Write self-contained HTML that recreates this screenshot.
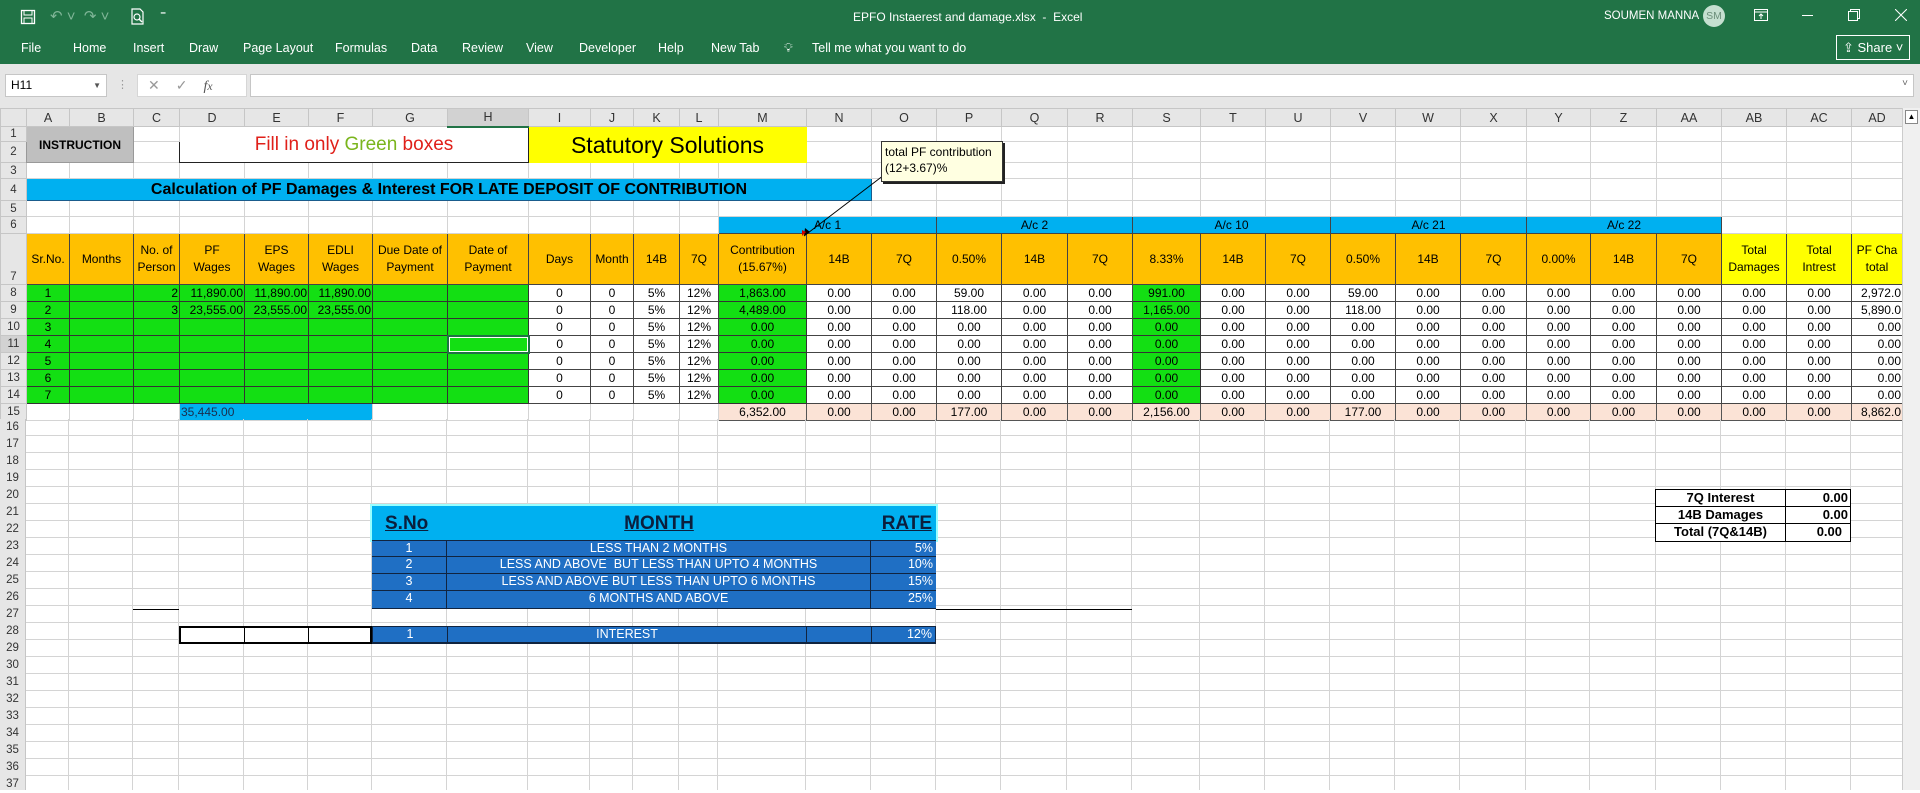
<!DOCTYPE html>
<html><head><meta charset="utf-8"><style>
*{box-sizing:border-box;margin:0;padding:0}
body{width:1920px;height:790px;overflow:hidden;background:#fff;font-family:"Liberation Sans",Arial,sans-serif;position:relative}
#title{position:absolute;left:0;top:0;width:1920px;height:64px;background:#217346;color:#fff}
#title .t{position:absolute;top:10px;font-size:12px}
#tabs span{position:absolute;top:41px;font-size:12.5px;color:#fff}
#fbar{position:absolute;left:0;top:64px;width:1920px;height:44px;background:#e6e6e6}
table{position:absolute;left:0;top:108px;width:1902px;border-collapse:collapse;table-layout:fixed;font-size:12px}
td{border:1px solid #d4d4d4;overflow:hidden;white-space:nowrap;padding:0 1px;line-height:14px}
td.h{background:#e6e6e6;text-align:center;color:#333;font-size:12.5px;border-color:#c6c6c6}
td.rh{background:#e6e6e6;text-align:center;color:#333;font-size:11.5px;border-color:#c6c6c6;padding:0}
.g{background:#13df13;border-color:#333}
.y{background:#ffc000;border-color:#444;text-align:center;white-space:normal;line-height:17px;padding:0 8px}
.yy{background:#ffff00;border-color:#444;text-align:center;white-space:normal;line-height:17px}
.b{background:#00b0f0;border-color:#444;text-align:center}
.p{background:#fbe3d6;border-color:#555}
.r{text-align:right}
.c{text-align:center}
.d{border-color:#444}
</style></head><body>
<div id="title">
<svg style="position:absolute;left:20px;top:9px" width="16" height="16" viewBox="0 0 16 16"><rect x="1.5" y="1.5" width="13" height="13" fill="none" stroke="#fff" stroke-width="1.3"/><rect x="4" y="1.5" width="8" height="4.5" fill="none" stroke="#fff"/><rect x="4" y="9" width="8" height="5.5" fill="none" stroke="#fff"/></svg>
<span class="t" style="left:50px;top:7px;font-size:15px;color:#7fb597">↶ ˅ &nbsp;↷ ˅</span>
<svg style="position:absolute;left:130px;top:8px" width="16" height="18" viewBox="0 0 16 18"><path d="M2 1h8l3 3v12H2z" fill="none" stroke="#fff" stroke-width="1.2"/><circle cx="7" cy="9" r="3" fill="none" stroke="#fff" stroke-width="1.2"/><path d="M9 11l3 3" stroke="#fff" stroke-width="1.4"/></svg>
<span class="t" style="left:160px;top:8px">⁼</span>
<span class="t" style="left:853px">EPFO Instaerest and damage.xlsx &nbsp;- &nbsp;Excel</span>
<span class="t" style="left:1604px;font-size:11.5px">SOUMEN MANNA</span>
<div style="position:absolute;left:1703px;top:5px;width:22px;height:22px;border-radius:50%;background:#c5dfd0;color:#6c8f7a;font-size:10.5px;text-align:center;line-height:22px">SM</div>
<svg style="position:absolute;left:1754px;top:9px" width="14" height="12"><rect x="0.5" y="0.5" width="13" height="11" fill="none" stroke="#fff"/><path d="M0 3h14M7 10V5M5 7l2-2 2 2" stroke="#fff" fill="none"/></svg>
<div style="position:absolute;left:1802px;top:15px;width:11px;height:1px;background:#fff"></div>
<svg style="position:absolute;left:1848px;top:9px" width="12" height="12"><rect x="0.5" y="2.5" width="9" height="9" fill="none" stroke="#fff"/><path d="M2.5 2.5V0.5h9v9h-2" fill="none" stroke="#fff"/></svg>
<svg style="position:absolute;left:1895px;top:9px" width="12" height="12"><path d="M0 0l12 12M12 0L0 12" stroke="#fff"/></svg>
<div id="tabs"><span style="left:21px">File</span><span style="left:73px">Home</span><span style="left:133px">Insert</span><span style="left:189px">Draw</span><span style="left:243px">Page Layout</span><span style="left:335px">Formulas</span><span style="left:411px">Data</span><span style="left:462px">Review</span><span style="left:526px">View</span><span style="left:579px">Developer</span><span style="left:658px">Help</span><span style="left:711px">New Tab</span><span style="left:784px">💡︎</span><span style="left:812px">Tell me what you want to do</span></div>
<div style="position:absolute;left:1836px;top:35px;width:74px;height:25px;border:1px solid #fff;color:#fff;font-size:13px;line-height:23px;padding-left:6px">⇪ Share ˅</div>
</div>
<div id="fbar">
<div style="position:absolute;left:5px;top:10px;width:102px;height:23px;background:#fff;border:1px solid #c6c6c6;font-size:12px;line-height:21px;padding-left:5px">H11<span style="position:absolute;right:5px;font-size:8px;color:#555">▼</span></div>
<span style="position:absolute;left:117px;top:14px;color:#999;font-size:11px">⋮</span>
<div style="position:absolute;left:137px;top:10px;width:110px;height:23px;background:#fff;border:1px solid #d6d6d6;color:#999;font-size:14px;line-height:21px"><span style="margin-left:10px">✕</span><span style="margin-left:16px">✓</span><i style="margin-left:16px;font-family:'Liberation Serif';color:#555">f<small>x</small></i></div>
<div style="position:absolute;left:250px;top:10px;width:1664px;height:23px;background:#fff;border:1px solid #c6c6c6"><span style="position:absolute;right:5px;top:3px;font-size:10px;color:#666">˅</span></div>
</div>
<table>
<colgroup><col style="width:26px"><col style="width:43px"><col style="width:64px"><col style="width:46px"><col style="width:65px"><col style="width:64px"><col style="width:64px"><col style="width:75px"><col style="width:81px"><col style="width:62px"><col style="width:43px"><col style="width:46px"><col style="width:39px"><col style="width:88px"><col style="width:65px"><col style="width:65px"><col style="width:65px"><col style="width:66px"><col style="width:65px"><col style="width:68px"><col style="width:65px"><col style="width:65px"><col style="width:65px"><col style="width:65px"><col style="width:66px"><col style="width:64px"><col style="width:66px"><col style="width:65px"><col style="width:65px"><col style="width:65px"><col style="width:51px"></colgroup>
<tr style="height:18px"><td class="h"></td><td class="h">A</td><td class="h">B</td><td class="h">C</td><td class="h">D</td><td class="h">E</td><td class="h">F</td><td class="h">G</td><td class="h" style="background:#d2d2d2;border-bottom:2px solid #217346">H</td><td class="h">I</td><td class="h">J</td><td class="h">K</td><td class="h">L</td><td class="h">M</td><td class="h">N</td><td class="h">O</td><td class="h">P</td><td class="h">Q</td><td class="h">R</td><td class="h">S</td><td class="h">T</td><td class="h">U</td><td class="h">V</td><td class="h">W</td><td class="h">X</td><td class="h">Y</td><td class="h">Z</td><td class="h">AA</td><td class="h">AB</td><td class="h">AC</td><td class="h">AD</td></tr>
<tr style="height:13px"><td class="rh">1</td><td rowspan="2" colspan="2" style="background:#bfbfbf;border-color:#999;font-weight:bold;font-size:12px;text-align:center">INSTRUCTION</td><td></td><td rowspan="2" colspan="5" style="border:1px solid #222;text-align:center;font-size:19px;color:#e0201a">Fill in only <span style="color:#7ab51d">Green</span> boxes</td><td rowspan="2" colspan="5" style="background:#ffff00;border-color:#ffff00;text-align:center;font-size:23px">Statutory Solutions</td><td></td><td></td><td></td><td></td><td></td><td></td><td></td><td></td><td></td><td></td><td></td><td></td><td></td><td></td><td></td><td></td><td></td></tr>
<tr style="height:21px"><td class="rh">2</td><td></td><td></td><td></td><td></td><td></td><td></td><td></td><td></td><td></td><td></td><td></td><td></td><td></td><td></td><td></td><td></td><td></td><td></td></tr>
<tr style="height:16px"><td class="rh">3</td><td></td><td></td><td></td><td></td><td></td><td></td><td></td><td></td><td></td><td></td><td></td><td></td><td></td><td></td><td></td><td></td><td></td><td></td><td></td><td></td><td></td><td></td><td></td><td></td><td></td><td></td><td></td><td></td><td></td></tr>
<tr style="height:22px"><td class="rh">4</td><td colspan="14" style="background:#00b0f0;border:1px solid #1a5c8c;text-align:center;font-weight:bold;font-size:16px">Calculation of PF Damages &amp; Interest FOR LATE DEPOSIT OF CONTRIBUTION</td><td></td><td></td><td></td><td></td><td></td><td></td><td></td><td></td><td></td><td></td><td></td><td></td><td></td><td></td><td></td><td></td></tr>
<tr style="height:16px"><td class="rh">5</td><td></td><td></td><td></td><td></td><td></td><td></td><td></td><td></td><td></td><td></td><td></td><td></td><td></td><td></td><td></td><td></td><td></td><td></td><td></td><td></td><td></td><td></td><td></td><td></td><td></td><td></td><td></td><td></td><td></td></tr>
<tr style="height:17px"><td class="rh">6</td><td></td><td></td><td></td><td></td><td></td><td></td><td></td><td></td><td></td><td></td><td></td><td></td><td class="b" colspan="3">A/c 1</td><td class="b" colspan="3">A/c 2</td><td class="b" colspan="3">A/c 10</td><td class="b" colspan="3">A/c 21</td><td class="b" colspan="3">A/c 22</td><td></td><td></td><td></td></tr>
<tr style="height:51px"><td class="rh" style="vertical-align:bottom">7</td><td class="y" style="padding:0">Sr.No.</td><td class="y">Months</td><td class="y" style="padding:0">No. of Person</td><td class="y">PF Wages</td><td class="y">EPS Wages</td><td class="y">EDLI Wages</td><td class="y" style="padding:0">Due Date of Payment</td><td class="y">Date of Payment</td><td class="y">Days</td><td class="y" style="padding:0">Month</td><td class="y" style="padding:0">14B</td><td class="y" style="padding:0">7Q</td><td class="y" style="padding:0">Contribution (15.67%)</td><td class="y">14B</td><td class="y">7Q</td><td class="y">0.50%</td><td class="y">14B</td><td class="y">7Q</td><td class="y">8.33%</td><td class="y">14B</td><td class="y">7Q</td><td class="y">0.50%</td><td class="y">14B</td><td class="y">7Q</td><td class="y">0.00%</td><td class="y">14B</td><td class="y">7Q</td><td class="yy">Total Damages</td><td class="yy">Total Intrest</td><td class="yy">PF Cha total</td></tr>
<tr style="height:17px"><td class="rh">8</td><td class="g c">1</td><td class="g"></td><td class="g r">2</td><td class="g r">11,890.00</td><td class="g r">11,890.00</td><td class="g r">11,890.00</td><td class="g"></td><td class="g"></td><td class="d c">0</td><td class="d c">0</td><td class="d c">5%</td><td class="d c">12%</td><td class="g c">1,863.00</td><td class="d c">0.00</td><td class="d c">0.00</td><td class="d c">59.00</td><td class="d c">0.00</td><td class="d c">0.00</td><td class="g c">991.00</td><td class="d c">0.00</td><td class="d c">0.00</td><td class="d c">59.00</td><td class="d c">0.00</td><td class="d c">0.00</td><td class="d c">0.00</td><td class="d c">0.00</td><td class="d c">0.00</td><td class="d c">0.00</td><td class="d c">0.00</td><td class="d r">2,972.0</td></tr>
<tr style="height:17px"><td class="rh">9</td><td class="g c">2</td><td class="g"></td><td class="g r">3</td><td class="g r">23,555.00</td><td class="g r">23,555.00</td><td class="g r">23,555.00</td><td class="g"></td><td class="g"></td><td class="d c">0</td><td class="d c">0</td><td class="d c">5%</td><td class="d c">12%</td><td class="g c">4,489.00</td><td class="d c">0.00</td><td class="d c">0.00</td><td class="d c">118.00</td><td class="d c">0.00</td><td class="d c">0.00</td><td class="g c">1,165.00</td><td class="d c">0.00</td><td class="d c">0.00</td><td class="d c">118.00</td><td class="d c">0.00</td><td class="d c">0.00</td><td class="d c">0.00</td><td class="d c">0.00</td><td class="d c">0.00</td><td class="d c">0.00</td><td class="d c">0.00</td><td class="d r">5,890.0</td></tr>
<tr style="height:17px"><td class="rh">10</td><td class="g c">3</td><td class="g"></td><td class="g"></td><td class="g"></td><td class="g"></td><td class="g"></td><td class="g"></td><td class="g"></td><td class="d c">0</td><td class="d c">0</td><td class="d c">5%</td><td class="d c">12%</td><td class="g c">0.00</td><td class="d c">0.00</td><td class="d c">0.00</td><td class="d c">0.00</td><td class="d c">0.00</td><td class="d c">0.00</td><td class="g c">0.00</td><td class="d c">0.00</td><td class="d c">0.00</td><td class="d c">0.00</td><td class="d c">0.00</td><td class="d c">0.00</td><td class="d c">0.00</td><td class="d c">0.00</td><td class="d c">0.00</td><td class="d c">0.00</td><td class="d c">0.00</td><td class="d r">0.00</td></tr>
<tr style="height:17px"><td class="rh" style="background:#d2d2d2">11</td><td class="g c">4</td><td class="g"></td><td class="g"></td><td class="g"></td><td class="g"></td><td class="g"></td><td class="g"></td><td class="g" style="border:2px solid #1f7244;box-shadow:inset 0 0 0 1px #fff"></td><td class="d c">0</td><td class="d c">0</td><td class="d c">5%</td><td class="d c">12%</td><td class="g c">0.00</td><td class="d c">0.00</td><td class="d c">0.00</td><td class="d c">0.00</td><td class="d c">0.00</td><td class="d c">0.00</td><td class="g c">0.00</td><td class="d c">0.00</td><td class="d c">0.00</td><td class="d c">0.00</td><td class="d c">0.00</td><td class="d c">0.00</td><td class="d c">0.00</td><td class="d c">0.00</td><td class="d c">0.00</td><td class="d c">0.00</td><td class="d c">0.00</td><td class="d r">0.00</td></tr>
<tr style="height:17px"><td class="rh">12</td><td class="g c">5</td><td class="g"></td><td class="g"></td><td class="g"></td><td class="g"></td><td class="g"></td><td class="g"></td><td class="g"></td><td class="d c">0</td><td class="d c">0</td><td class="d c">5%</td><td class="d c">12%</td><td class="g c">0.00</td><td class="d c">0.00</td><td class="d c">0.00</td><td class="d c">0.00</td><td class="d c">0.00</td><td class="d c">0.00</td><td class="g c">0.00</td><td class="d c">0.00</td><td class="d c">0.00</td><td class="d c">0.00</td><td class="d c">0.00</td><td class="d c">0.00</td><td class="d c">0.00</td><td class="d c">0.00</td><td class="d c">0.00</td><td class="d c">0.00</td><td class="d c">0.00</td><td class="d r">0.00</td></tr>
<tr style="height:17px"><td class="rh">13</td><td class="g c">6</td><td class="g"></td><td class="g"></td><td class="g"></td><td class="g"></td><td class="g"></td><td class="g"></td><td class="g"></td><td class="d c">0</td><td class="d c">0</td><td class="d c">5%</td><td class="d c">12%</td><td class="g c">0.00</td><td class="d c">0.00</td><td class="d c">0.00</td><td class="d c">0.00</td><td class="d c">0.00</td><td class="d c">0.00</td><td class="g c">0.00</td><td class="d c">0.00</td><td class="d c">0.00</td><td class="d c">0.00</td><td class="d c">0.00</td><td class="d c">0.00</td><td class="d c">0.00</td><td class="d c">0.00</td><td class="d c">0.00</td><td class="d c">0.00</td><td class="d c">0.00</td><td class="d r">0.00</td></tr>
<tr style="height:17px"><td class="rh">14</td><td class="g c">7</td><td class="g"></td><td class="g"></td><td class="g"></td><td class="g"></td><td class="g"></td><td class="g"></td><td class="g"></td><td class="d c">0</td><td class="d c">0</td><td class="d c">5%</td><td class="d c">12%</td><td class="g c">0.00</td><td class="d c">0.00</td><td class="d c">0.00</td><td class="d c">0.00</td><td class="d c">0.00</td><td class="d c">0.00</td><td class="g c">0.00</td><td class="d c">0.00</td><td class="d c">0.00</td><td class="d c">0.00</td><td class="d c">0.00</td><td class="d c">0.00</td><td class="d c">0.00</td><td class="d c">0.00</td><td class="d c">0.00</td><td class="d c">0.00</td><td class="d c">0.00</td><td class="d r">0.00</td></tr>
<tr style="height:17px"><td class="rh">15</td><td></td><td></td><td></td><td colspan="3" style="background:#00b0f0;color:#1a2d4d">35,445.00</td><td></td><td></td><td></td><td></td><td></td><td></td><td class="p c">6,352.00</td><td class="p c">0.00</td><td class="p c">0.00</td><td class="p c">177.00</td><td class="p c">0.00</td><td class="p c">0.00</td><td class="p c">2,156.00</td><td class="p c">0.00</td><td class="p c">0.00</td><td class="p c">177.00</td><td class="p c">0.00</td><td class="p c">0.00</td><td class="p c">0.00</td><td class="p c">0.00</td><td class="p c">0.00</td><td class="p c">0.00</td><td class="p c">0.00</td><td class="p r">8,862.0</td></tr>
</table>
<div style="position:absolute;left:0;top:419px;width:1902px;height:371px;background:
repeating-linear-gradient(to bottom,transparent 0,transparent 16px,#d4d4d4 16px,#d4d4d4 17px);"></div>
<div style="position:absolute;left:0;top:419px;width:26px;height:371px;background:#e6e6e6;border-right:1px solid #c6c6c6;font-size:11.5px;color:#333;text-align:center;line-height:17px">16<br>17<br>18<br>19<br>20<br>21<br>22<br>23<br>24<br>25<br>26<br>27<br>28<br>29<br>30<br>31<br>32<br>33<br>34<br>35<br>36<br>37</div>
<svg style="position:absolute;left:0;top:419px" width="1902" height="371">
<g stroke="#d4d4d4" stroke-width="1">
<path d="M68.5 0V371M132.5 0V371M178.5 0V371M243.5 0V371M307.5 0V371M371.5 0V371M446.5 0V371M527.5 0V371M589.5 0V371M632.5 0V371M678.5 0V371M717.5 0V371M805.5 0V371M870.5 0V371M935.5 0V371M1000.5 0V371M1066.5 0V371M1131.5 0V371M1199.5 0V371M1264.5 0V371M1329.5 0V371M1394.5 0V371M1459.5 0V371M1525.5 0V371M1589.5 0V371M1655.5 0V371M1720.5 0V371M1785.5 0V371M1850.5 0V371"/>
</g>
<path d="M133 190.5H179M936 190.5H1132" stroke="#000" stroke-width="1"/>
</svg>
<div style="position:absolute;left:372px;top:506px;width:564px;height:34px;background:#00b0f0;box-shadow:0 0 0 2px #9ff"></div>
<div style="position:absolute;left:385px;top:513px;font-size:19px;color:#0b1f3d;font-weight:bold;text-decoration:underline">S.No</div>
<div style="position:absolute;left:447px;top:513px;width:424px;text-align:center;font-size:19px;color:#0b1f3d;font-weight:bold;text-decoration:underline">MONTH</div>
<div style="position:absolute;left:870px;top:513px;width:62px;text-align:right;font-size:19px;color:#0b1f3d;font-weight:bold;text-decoration:underline">RATE</div>
<div style="position:absolute;left:372px;top:540px;width:564px;font-size:12.5px;color:#fff">
<div style="display:flex;height:17px;background:#1f6fc4;border-bottom:1px solid #11243f;border-top:1px solid #11243f"><div style="width:75px;text-align:center;border-right:1px solid #11243f">1</div><div style="width:424px;text-align:center;border-right:1px solid #11243f">LESS THAN 2 MONTHS</div><div style="flex:1;text-align:right;padding-right:3px">5%</div></div>
<div style="display:flex;height:17px;background:#1f6fc4;border-bottom:1px solid #11243f"><div style="width:75px;text-align:center;border-right:1px solid #11243f">2</div><div style="width:424px;text-align:center;border-right:1px solid #11243f">LESS AND ABOVE &nbsp;BUT LESS THAN UPTO 4 MONTHS</div><div style="flex:1;text-align:right;padding-right:3px">10%</div></div>
<div style="display:flex;height:17px;background:#1f6fc4;border-bottom:1px solid #11243f"><div style="width:75px;text-align:center;border-right:1px solid #11243f">3</div><div style="width:424px;text-align:center;border-right:1px solid #11243f">LESS AND ABOVE BUT LESS THAN UPTO 6 MONTHS</div><div style="flex:1;text-align:right;padding-right:3px">15%</div></div>
<div style="display:flex;height:18px;background:#1f6fc4;border-bottom:1px solid #11243f"><div style="width:75px;text-align:center;border-right:1px solid #11243f">4</div><div style="width:424px;text-align:center;border-right:1px solid #11243f">6 MONTHS AND ABOVE</div><div style="flex:1;text-align:right;padding-right:3px">25%</div></div>
</div>
<div style="position:absolute;left:179px;top:626px;width:193px;height:18px;border:2px solid #000;background:#fff;display:flex"><div style="width:64px;border-right:1px solid #000"></div><div style="width:64px;border-right:1px solid #000"></div></div>
<div style="position:absolute;left:372px;top:626px;width:564px;height:18px;background:#1f6fc4;border:1px solid #11243f;border-bottom:2px solid #11243f;display:flex;font-size:12.5px;color:#fff"><div style="width:75px;text-align:center;border-right:1px solid #11243f">1</div><div style="width:359px;text-align:center;border-right:1px solid #11243f">INTEREST</div><div style="width:65px;border-right:1px solid #11243f"></div><div style="flex:1;text-align:right;padding-right:3px">12%</div></div>
<div style="position:absolute;left:1655px;top:489px;width:196px;height:53px;border:1px solid #000;background:#fff;font-size:13px;font-weight:bold">
<div style="display:flex;height:17px;border-bottom:1px solid #000"><div style="width:130px;text-align:center;border-right:1px solid #000">7Q Interest</div><div style="flex:1;text-align:right;padding-right:2px">0.00</div></div>
<div style="display:flex;height:17px;border-bottom:1px solid #000"><div style="width:130px;text-align:center;border-right:1px solid #000">14B Damages</div><div style="flex:1;text-align:right;padding-right:2px">0.00</div></div>
<div style="display:flex;height:17px"><div style="width:130px;text-align:center;border-right:1px solid #000">Total (7Q&amp;14B)</div><div style="flex:1;text-align:right;padding-right:8px">0.00</div></div>
</div>
<svg style="position:absolute;left:790px;top:170px" width="110" height="80"><path d="M98 2L14 66" stroke="#000" stroke-width="1"/><path d="M14 66l1-8 5 4z" fill="#000"/><path d="M16 62l-4 4v-6z" fill="#c00"/></svg>
<div style="position:absolute;left:881px;top:141px;width:122px;height:41px;background:#ffffe1;border:1px solid #333;box-shadow:2px 2px 0 #222;font-size:12px;line-height:16px;padding:2px 3px">total PF contribution<br>(12+3.67)%</div>
<div style="position:absolute;left:1902px;top:108px;width:18px;height:682px;background:#f0f0f0;border-left:1px solid #ccc"><div style="margin:2px;height:14px;border:1px solid #888;background:#fff;font-size:8px;text-align:center;line-height:12px">▲</div></div>
</body></html>
